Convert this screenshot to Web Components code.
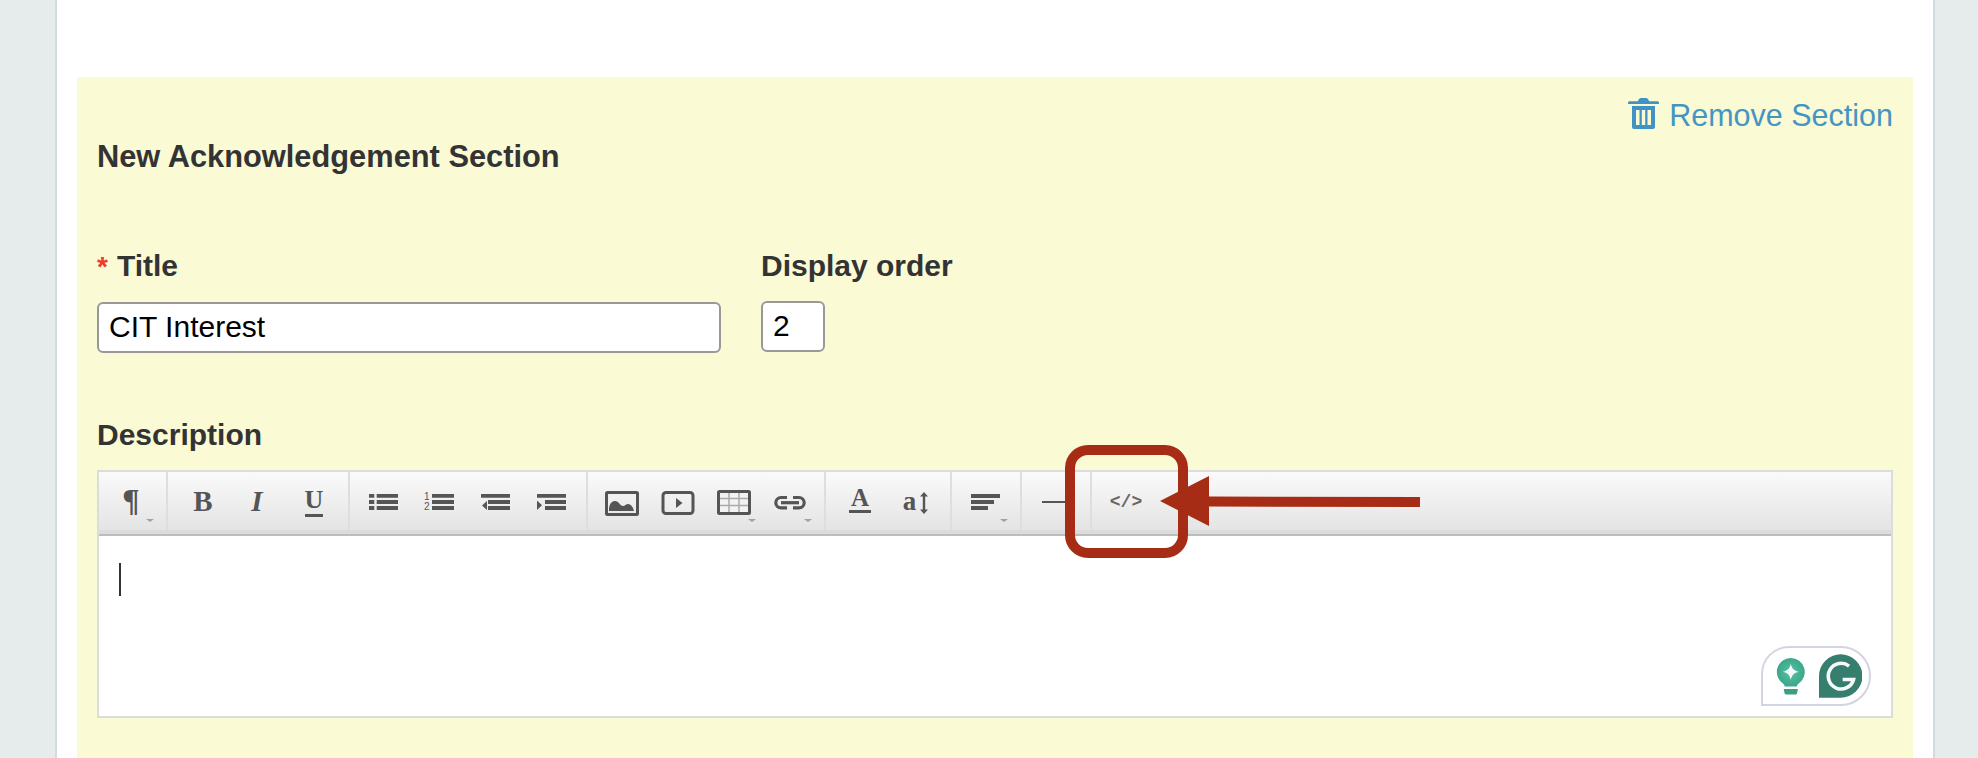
<!DOCTYPE html>
<html>
<head>
<meta charset="utf-8">
<title>New Acknowledgement Section</title>
<style>
  html, body { margin: 0; padding: 0; background: #e6ecec; }
</style>
</head>
<body>
<x-page>
  <x-section heading="New Acknowledgement Section" remove="Remove Section">
    <x-field label="Title" required width="624" value="CIT Interest"></x-field>
    <x-field label="Display order" width="64" value="2"></x-field>
    <x-editor slot="editor" label="Description">
      <x-tool-group first><x-tool icon="para" caret></x-tool></x-tool-group>
      <x-tool-group><x-tool icon="bold"></x-tool><x-tool icon="italic"></x-tool><x-tool icon="underline"></x-tool></x-tool-group>
      <x-tool-group><x-tool icon="ul"></x-tool><x-tool icon="ol"></x-tool><x-tool icon="outdent"></x-tool><x-tool icon="indent"></x-tool></x-tool-group>
      <x-tool-group><x-tool icon="image"></x-tool><x-tool icon="video"></x-tool><x-tool icon="table" caret></x-tool><x-tool icon="link" caret></x-tool></x-tool-group>
      <x-tool-group><x-tool icon="color"></x-tool><x-tool icon="size"></x-tool></x-tool-group>
      <x-tool-group><x-tool icon="align" caret></x-tool></x-tool-group>
      <x-tool-group><x-tool icon="hr"></x-tool></x-tool-group>
      <x-tool-group last><x-tool icon="code"></x-tool></x-tool-group>
    </x-editor>
  </x-section>
  <x-callout></x-callout>
</x-page>

<script>
// icons are drawn in the coordinates of a 56x58 toolbar cell
const ICONS = {
  para: `<span class="t" style="font:bold 32px 'Liberation Serif',serif;margin:-2px 0 0 -2px">¶</span>`,
  bold: `<span class="t" style="font:bold 29px 'Liberation Serif',serif;margin:0 0 0 2px">B</span>`,
  italic: `<span class="t" style="font:italic bold 29px 'Liberation Serif',serif;margin:0 0 0 -2px">I</span>`,
  underline: `<span class="t" style="font:bold 26px 'Liberation Serif',serif;margin:3px 0 0 0;border-bottom:3px solid #555;line-height:24px;padding:0 0 2px">U</span>`,
  ul: `<svg viewBox="0 0 56 58"><path d="M13 22h5.300v3.800H13zM20.700 22H42v3.800H20.700zM13 28h5.300v4H13zM20.700 28H42v4H20.700zM13 34h5.300v4H13zM20.700 34H42v4H20.700z"/></svg>`,
  ol: `<svg viewBox="0 0 56 58"><path d="M20 22h22v3.800H20zM20 28h22v4H20zM20 34h22v4H20z"/><text x="12" y="28" font-family="Liberation Sans" font-size="10">1</text><text x="12" y="38" font-family="Liberation Sans" font-size="10">2</text></svg>`,
  outdent: `<svg viewBox="0 0 56 58"><path d="M13 22h29v3.800H13zM20 28h22v4H20zM20 34h22v4H20zM19 29v9l-5-4.500z"/></svg>`,
  indent: `<svg viewBox="0 0 56 58"><path d="M13 22h29v3.800H13zM21 28h21v4H21zM21 34h21v4H21zM13 28.500v9.500l5-4.800z"/></svg>`,
  image: `<svg viewBox="0 0 56 58"><rect x="12.500" y="20.500" width="31" height="22" rx="1" fill="none" stroke="#555" stroke-width="3"/><path d="M15 39v-3c1-5 3-7 6-7 4 0 5 5 8 5 2 0 3-2 5-2 3 0 5 3 6 7z"/></svg>`,
  video: `<svg viewBox="0 0 56 58"><rect x="13" y="20.500" width="30" height="21" rx="3" fill="none" stroke="#555" stroke-width="3"/><path d="M26 26l6.500 5-6.500 5z"/></svg>`,
  table: `<svg viewBox="0 0 56 58"><rect x="12.500" y="19.500" width="31" height="22" rx="1" fill="#f2f2f2" stroke="#555" stroke-width="3"/><path d="M14 26.500h28M14 33.500h28M23 21v19M33 21v19" stroke="#aaa" stroke-width="1.500" fill="none"/></svg>`,
  link: `<svg viewBox="0 0 56 58"><path d="M25 25.500h-6a5.200 5.200 0 0 0 0 10.400h6M31 25.500h6a5.200 5.200 0 0 1 0 10.400h-6" fill="none" stroke="#555" stroke-width="3.200"/><path d="M19 29.100h18v3.200H19z"/></svg>`,
  color: `<span class="t" style="font:bold 25px 'Liberation Serif',serif;margin:-1px 0 0 0;border-bottom:3px solid #555;line-height:20px;padding:0 2px 2px">A</span>`,
  size: `<span class="t" style="font:bold 27px 'Liberation Serif',serif;margin:1px 0 0 0">a</span><svg viewBox="0 0 10 22" style="width:10px;height:22px;margin:3px 0 0 3px"><path d="M5 0l4 4.500H6.200v13H9L5 22l-4-4.500h2.800v-13H1z"/></svg>`,
  align: `<svg viewBox="0 0 56 58"><path d="M13 22h29v4H13zM13 28h23v4H13zM13 34h17v4H13z"/></svg>`,
  hr: `<svg viewBox="0 0 56 58"><path d="M14 29h28v2H14z"/></svg>`,
  code: `<span class="t" style="font:bold 18px 'Liberation Mono',monospace;color:#666;margin:2px 0 0 0">&lt;/&gt;</span>`,
};

class Page extends HTMLElement {
  constructor() {
    super();
    this.attachShadow({ mode: "open" });
    this.shadowRoot.innerHTML = `
    <style>
      :host { display: block; position: relative; height: 758px; overflow: hidden; background: #e6ecec; padding: 0 43px 0 55px; }
      .card { height: 100%; background: #fff; border: solid #d0dce0; border-width: 0 2px; padding: 77px 20px 0; font-family: "Liberation Sans", Arial, sans-serif; color: #333; }
    </style>
    <div class="card"><slot></slot></div>`;
  }
}

class Section extends HTMLElement {
  constructor() {
    super();
    this.attachShadow({ mode: "open" });
    this.shadowRoot.innerHTML = `
    <style>
      :host { display: block; background: #fafad5; padding: 20px 20px 80px; }
      .remove { display: flex; justify-content: flex-end; align-items: center; gap: 10px; height: 34px; margin-top: 1px; color: #4595c3; font-size: 30.5px; }
      .remove svg { width: 31px; height: 31px; margin-top: -3px; fill: #4093c2; }
      h2 { margin: 8px 0 0; font: bold 30.8px/34px "Liberation Sans", Arial, sans-serif; color: #333; }
      .row { display: flex; gap: 40px; margin-top: 75px; }
      .editor { margin-top: 65px; }
    </style>
    <div class="remove">
      <svg viewBox="0 0 31 31"><path d="M0 4.800C0 3.800.7 3.300 2 3.300h8C10.300 1.300 11.500 0 13 0h5c1.500 0 2.700 1.300 3 3.300h8c1.300 0 2 .5 2 1.500V6H0zM4 8h23v21c0 1.200-.8 2-2 2H6c-1.200 0-2-.8-2-2zm4 4v15h3.500V12zm5.800 0v15h3.400V12zm5.700 0v15H23V12z" fill-rule="evenodd"/></svg>
      <span>${this.getAttribute("remove")}</span>
    </div>
    <h2>${this.getAttribute("heading")}</h2>
    <div class="row"><slot></slot></div>
    <div class="editor"><slot name="editor"></slot></div>`;
  }
}

class Field extends HTMLElement {
  constructor() {
    super();
    this.attachShadow({ mode: "open" });
    const star = this.hasAttribute("required") ? `<span class="star">*</span>` : "";
    this.shadowRoot.innerHTML = `
    <style>
      :host { display: block; }
      label { display: block; font: bold 30px/34px "Liberation Sans", Arial, sans-serif; color: #333; margin-bottom: 18px; white-space: nowrap; }
      .star { color: #f03a2e; font-size: 28px; margin-right: 9px; }
      .box { box-sizing: border-box; height: 51px; width: ${this.getAttribute("width")}px; background: #fff; border: 2px solid #999; border-radius: 6px; padding: 0 10px; font: 30px/45px "Liberation Sans", Arial, sans-serif; color: #000; }
    </style>
    <label>${star}${this.getAttribute("label")}</label>
    <div class="box">${this.getAttribute("value")}</div>`;
  }
}

class Editor extends HTMLElement {
  constructor() {
    super();
    this.attachShadow({ mode: "open" });
    this.shadowRoot.innerHTML = `
    <style>
      :host { display: block; }
      label { display: block; font: bold 30px/34px "Liberation Sans", Arial, sans-serif; color: #333; margin-bottom: 18px; }
      .frame { border: 2px solid #dcdcdc; }
      .toolbar { display: flex; height: 58px; background: linear-gradient(#fafafa, #e4e4e4); border-bottom: 4px solid #dcdcdc; }
      .strip { height: 2px; background: #bdbdbd; }
      .body { position: relative; height: 180px; background: #fff; padding: 27px 20px 0; box-sizing: border-box; }
      .caret { width: 2px; height: 33px; background: #333; }
      x-grammarly { position: absolute; right: 20px; bottom: 10px; }
    </style>
    <label>${this.getAttribute("label")}</label>
    <div class="frame">
      <div class="toolbar"><slot></slot></div>
      <div class="strip"></div>
      <div class="body"><div class="caret"></div><x-grammarly></x-grammarly></div>
    </div>`;
  }
}

class ToolGroup extends HTMLElement {
  constructor() {
    super();
    this.attachShadow({ mode: "open" });
    this.shadowRoot.innerHTML = `
    <style>
      :host { display: flex; padding: 0 6px; border-right: 2px solid #dedede; }
      :host([first]) { padding-left: 5px; }
      :host([last]) { border-right: 0; }
    </style>
    <slot></slot>`;
  }
}

class Tool extends HTMLElement {
  constructor() {
    super();
    this.attachShadow({ mode: "open" });
    const caret = this.hasAttribute("caret") ? `<i></i>` : "";
    this.shadowRoot.innerHTML = `
    <style>
      :host { display: flex; align-items: center; justify-content: center; position: relative; width: 56px; height: 58px; color: #555; }
      svg { width: 56px; height: 58px; fill: #555; display: block; }
      i { position: absolute; right: 6px; top: 47px; border: solid transparent; border-width: 3px 4px 0; border-top-color: #a0a0a0; }
      .t { display: block; line-height: 1; }
    </style>
    ${ICONS[this.getAttribute("icon")]}${caret}`;
  }
}

class Grammarly extends HTMLElement {
  constructor() {
    super();
    this.attachShadow({ mode: "open" });
    this.shadowRoot.innerHTML = `
    <style>
      :host { display: flex; align-items: center; gap: 13px; box-sizing: border-box; width: 110px; height: 60px; padding: 0 7px 0 13px; background: #fff; border: 2px solid #d2d4e1; border-radius: 28px 30px 30px 0; }
      svg { display: block; }
      .bulb { margin-top: 2px; }
    </style>
    <svg class="bulb" width="30" height="40" viewBox="0 0 30 42">
      <defs><radialGradient id="b"><stop offset="0" stop-color="#55c4a6"/><stop offset="1" stop-color="#3da58a"/></radialGradient></defs>
      <path d="M15 1a14.700 14.700 0 0 1 8 27c-1 .7-1.500 1.500-1.600 3H8.600c-.1-1.500-.6-2.300-1.600-3A14.700 14.700 0 0 1 15 1z" fill="url(#b)"/>
      <path d="M7.500 33.500h15l-1 4.500c-.2 1-1 1.500-2 1.500h-9c-1 0-1.800-.5-2-1.500z" fill="#3d9c84"/>
      <path d="M15 7c1 5 3.500 7.500 8.500 8.500-5 1-7.500 3.500-8.500 8.500-1-5-3.500-7.500-8.500-8.500C11.500 14.500 14 12 15 7z" fill="#f4fbf9"/>
    </svg>
    <svg width="44" height="44" viewBox="0 0 44 44">
      <path d="M22 0a22 22 0 0 1 0 44H0V22A22 22 0 0 1 22 0z" fill="#367f6e"/>
      <path d="M30.500 12A13 13 0 1 0 35 25.500H24" fill="none" stroke="#f6faf9" stroke-width="3.600"/>
    </svg>`;
  }
}

// the red annotation drawn on top of the screenshot
class Callout extends HTMLElement {
  constructor() {
    super();
    this.attachShadow({ mode: "open" });
    this.shadowRoot.innerHTML = `
    <style>
      :host { position: absolute; left: 1060px; top: 440px; display: block; }
      svg { display: block; }
    </style>
    <svg width="370" height="125" viewBox="0 0 370 125">
      <rect x="10" y="10" width="113" height="103" rx="18" fill="none" stroke="#a72c15" stroke-width="10"/>
      <path d="M100 61L149 36V56.500L360 57V67L149 66.500V86z" fill="#a72c15"/>
    </svg>`;
  }
}

customElements.define("x-page", Page);
customElements.define("x-section", Section);
customElements.define("x-field", Field);
customElements.define("x-editor", Editor);
customElements.define("x-tool-group", ToolGroup);
customElements.define("x-tool", Tool);
customElements.define("x-grammarly", Grammarly);
customElements.define("x-callout", Callout);
</script>
</body>
</html>
